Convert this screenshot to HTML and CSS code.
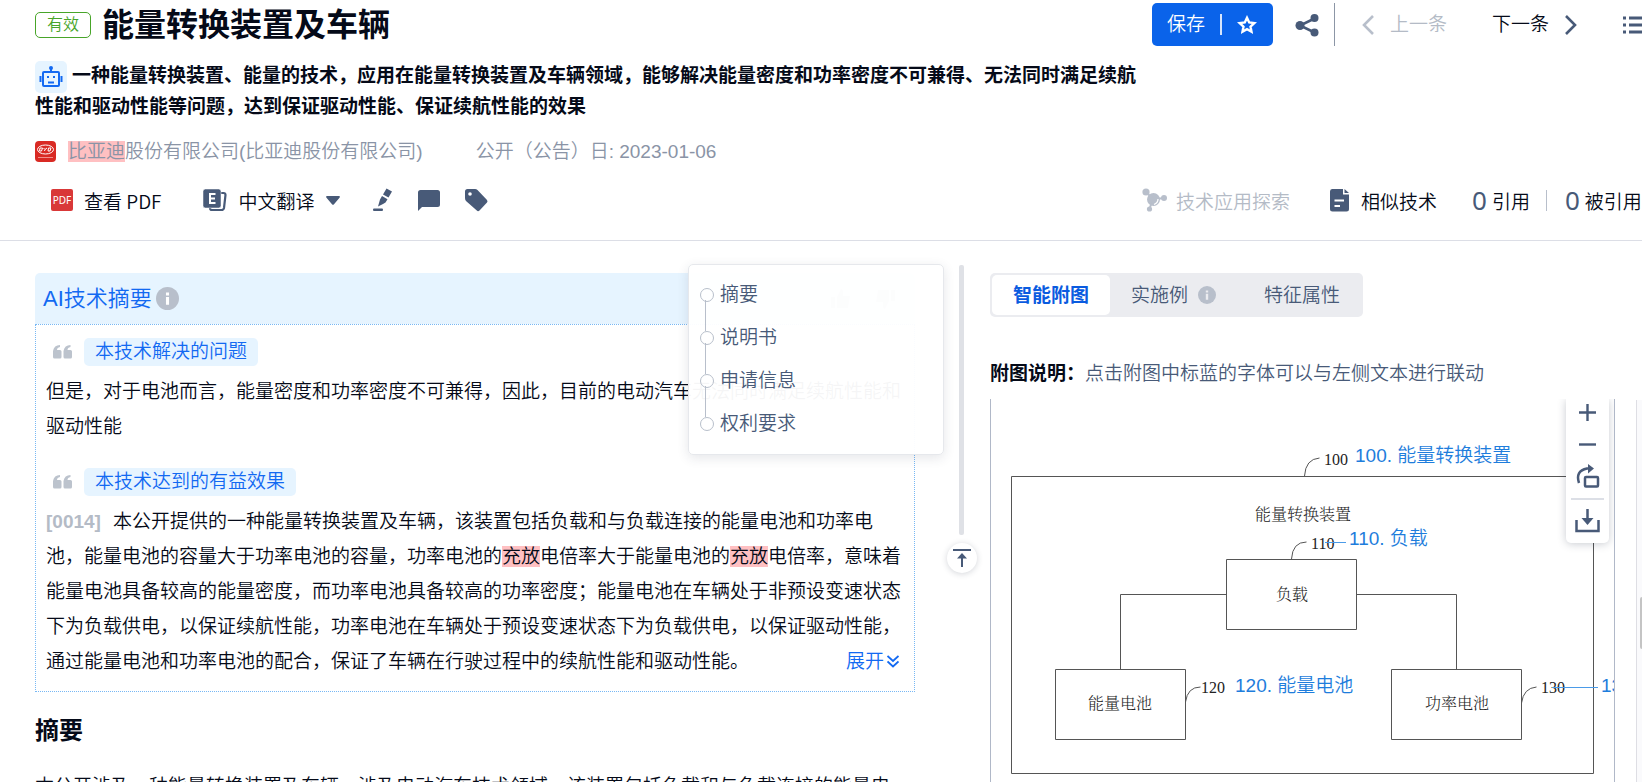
FILE: index.html
```html
<!DOCTYPE html>
<html lang="zh-CN">
<head>
<meta charset="utf-8">
<title>能量转换装置及车辆</title>
<link rel="stylesheet" href="styles.css">
</head>
<body>
<header class="header">
  <div class="header-top">
    <div class="heading">
      <div class="title-row">
        <span class="status">有效</span>
        <h1 class="title">能量转换装置及车辆</h1>
      </div>
      <p class="brief"><span class="robot"><svg width="24" height="26" viewBox="0 0 24 26" fill="none" stroke="#1269f2" stroke-width="2"><rect x="4" y="8" width="16" height="14" rx="1"/><path d="M12 3v5M1.500 12v6M22.500 12v6M9 18.500h6"/><circle cx="12" cy="4" r="1" fill="#1269f2"/><path d="M8 13h2M14 13h2" /></svg></span>一种能量转换装置、能量的技术，应用在能量转换装置及车辆领域，能够解决能量密度和功率密度不可兼得、无法同时满足续航性能和驱动性能等问题，达到保证驱动性能、保证续航性能的效果</p>
    </div>
    <div class="actions">
      <button class="save" type="button"><span>保存</span><i class="save-line"></i><svg width="20" height="20" viewBox="0 0 20 20" fill="none" stroke="#fff" stroke-width="2.400"><path d="M10 2.800l2.200 4.700 5.100.6-3.800 3.500 1 5.100-4.500-2.500-4.500 2.500 1-5.100-3.800-3.500 5.100-.6z"/></svg></button>
      <button class="share" type="button" aria-label="分享"><svg width="24" height="24" viewBox="0 0 24 24" fill="#485a78"><circle cx="5" cy="12.500" r="4.500"/><circle cx="19.500" cy="5" r="4"/><circle cx="19.500" cy="19.500" r="4"/><path d="M19.500 5.500L5 12.500l14.500 7" fill="none" stroke="#485a78" stroke-width="2.500"/></svg></button>
      <i class="actions-line"></i>
      <button class="step prev" type="button" disabled><svg width="12" height="20" viewBox="0 0 12 20" fill="none" stroke="#b8bfcb" stroke-width="2.600"><path d="M11 1L2 10l9 9"/></svg><span>上一条</span></button>
      <button class="step next" type="button"><span>下一条</span><svg width="12" height="20" viewBox="0 0 12 20" fill="none" stroke="#485a78" stroke-width="2.600"><path d="M1 1l9 9-9 9"/></svg></button>
      <button class="list" type="button" aria-label="列表"><svg width="28" height="20" viewBox="0 0 28 20" stroke="#485a78" stroke-width="3"><path d="M1 3h3M7 3h20M1 10h3M7 10h20M1 17h3M7 17h20"/></svg></button>
    </div>
  </div>
  <div class="meta">
    <svg class="logo" width="21" height="21" viewBox="0 0 21 21"><rect width="21" height="21" rx="4" fill="#d92a24"/><ellipse cx="10.500" cy="8.500" rx="8" ry="4.500" fill="none" stroke="#fff" stroke-width="1"/><path d="M5 7h2.500L6.500 10H4.500zM8.500 7l1.500 1.500L9.500 10M12 7l-2 1.500M13.500 7h2.500L15 10h-2z" fill="none" stroke="#fff"/><path d="M3 16.500h15" stroke="#f0908c"/></svg>
    <span class="company"><mark>比亚迪</mark>股份有限公司(比亚迪股份有限公司)</span>
    <span>公开（公告）日: 2023-01-06</span>
  </div>
  <div class="toolbar">
    <div class="tools">
      <button class="tool pdf" type="button"><span class="pdf-icon">PDF</span>查看 PDF</button>
      <button class="tool translate" type="button"><svg width="24" height="24" viewBox="0 0 24 24"><path d="M9 5h11.500q2 0 2 2l-1.500 13q-.5 2-2.500 2H9q-2 0-2-2z" fill="none" stroke="#485a78" stroke-width="2.200"/><rect x="0" y="1" width="18" height="19" rx="2.500" fill="#485a78" stroke="#fff" stroke-width=".5"/><path d="M12.500 6H7v9h5.500M7 10.500h5" fill="none" stroke="#fff" stroke-width="2"/></svg><span>中文翻译</span><svg class="caret" width="14" height="9" viewBox="0 0 14 9" fill="#485a78"><path d="M1 0h12q1.500.5.5 1.700L8 8.300q-1 1-2 0L.5 1.700Q-.5.500 1 0z"/></svg></button>
      <button class="tool" type="button" aria-label="高亮"><svg width="20" height="24" viewBox="0 0 20 24" fill="#485a78"><path d="M13.500 0.500l5.500 3-3.500 6-5.500-3zM9 8l5.500 3.200-2 3.300-2.500 1.500-5 2.500 2-7zM1 20.500h8q1 0 1 1.200T9 23H1q-1 0-1-1.200t1-1.300z"/></svg></button>
      <button class="tool" type="button" aria-label="评论"><svg width="22" height="22" viewBox="0 0 22 22" fill="#485a78"><path d="M2.500 1h17Q22 1 22 3.500v12q0 2.500-2.500 2.500H4L0 22V3.500Q0 1 2.500 1z"/></svg></button>
      <button class="tool" type="button" aria-label="标签"><svg width="23" height="24" viewBox="0 0 23 24"><path d="M2.500 1H10q1.500 0 2.500 1l9.500 10q1 1.500 0 2.500l-7.500 8q-1.500 1.300-2.700 0L1 13Q0 12 0 10V3.500Q0 1 2.500 1z" fill="#485a78"/><circle cx="5" cy="6" r="1.800" fill="#fff"/></svg></button>
    </div>
    <div class="related">
      <button class="tool explore" type="button" disabled><svg width="25" height="24" viewBox="0 0 25 24" fill="#b8bfcb"><circle cx="4" cy="4" r="3.600"/><circle cx="22" cy="10" r="3"/><circle cx="7.500" cy="21" r="2.600"/><circle cx="11.500" cy="11.500" r="6.500"/><path d="M4 4l6 6M7.500 21l2-6M14 11l8-1" stroke="#b8bfcb" stroke-width="2"/><path d="M16 11q0 4-4 5.500" fill="none" stroke="#fff" stroke-width="1.300"/></svg>技术应用探索</button>
      <button class="tool similar" type="button"><svg width="19" height="23" viewBox="0 0 19 23"><path d="M2 0h11v5.500h6V20q0 2.500-2.500 2.500h-14Q0 22.500 0 20V2.500Q0 0 2 0zM14.500 0L19 4h-4.500z" fill="#485a78"/><path d="M4.500 11.500h9.500M4.500 17h5.500" stroke="#fff" stroke-width="2"/></svg>相似技术</button>
      <a class="cite" href="#"><b>0</b>引用</a>
      <i class="cite-line"></i>
      <a class="cite" href="#"><b>0</b>被引用</a>
    </div>
  </div>
</header>

<main class="main">
  <article class="article">
    <section class="summary">
      <div class="summary-head">
        <h2>AI技术摘要</h2>
        <svg width="23" height="23" viewBox="0 0 18 18"><circle cx="9" cy="9" r="9" fill="#b8bfcb"/><path d="M9 7.800v6M9 4.400v2.200" stroke="#fff" stroke-width="2.400"/></svg>
        <span class="votes"><svg width="20" height="20" viewBox="0 0 20 20" fill="#b8bfcb"><path d="M0 8h4v11H0zM6 8l4-8q3 0 2 7h7l-2 12H6z"/></svg><svg width="20" height="20" viewBox="0 0 20 20" fill="#b8bfcb"><path d="M20 1h-4v11h4zM14 12l-4 8q-3 0-2-7H1L3 1h11z"/></svg></span>
      </div>
      <div class="summary-body">
        <h3 class="point"><svg width="19" height="14" viewBox="0 0 19 14" fill="#bcc3cd"><path d="M7 0v2Q4 2.500 4 5h3q1.500 0 1.500 1.500V12Q8.500 13.500 7 13.500H1.500Q0 13.500 0 12V6Q1 0 7 0z"/><path d="M17.500 0v2q-3 .5-3 3h3Q19 5 19 6.500V12q0 1.500-1.500 1.500H12q-1.500 0-1.500-1.500V6q1-6 7-6z"/></svg><span>本技术解决的问题</span></h3>
        <p class="text">但是，对于电池而言，能量密度和功率密度不可兼得，因此，目前的电动汽车无法同时满足续航性能和驱动性能</p>
        <h3 class="point later"><svg width="19" height="14" viewBox="0 0 19 14" fill="#bcc3cd"><path d="M7 0v2Q4 2.500 4 5h3q1.500 0 1.500 1.500V12Q8.500 13.500 7 13.500H1.500Q0 13.500 0 12V6Q1 0 7 0z"/><path d="M17.500 0v2q-3 .5-3 3h3Q19 5 19 6.500V12q0 1.500-1.500 1.500H12q-1.500 0-1.500-1.500V6q1-6 7-6z"/></svg><span>本技术达到的有益效果</span></h3>
        <p class="text"><b class="para">[0014]</b>本公开提供的一种能量转换装置及车辆，该装置包括负载和与负载连接的能量电池和功率电池，能量电池的容量大于功率电池的容量，功率电池的<mark>充放</mark>电倍率大于能量电池的<mark>充放</mark>电倍率，意味着能量电池具备较高的能量密度，而功率电池具备较高的功率密度；能量电池在车辆处于非预设变速状态下为负载供电，以保证续航性能，功率电池在车辆处于预设变速状态下为负载供电，以保证驱动性能，通过能量电池和功率电池的配合，保证了车辆在行驶过程中的续航性能和驱动性能。<a class="expand" href="#">展开<svg width="12" height="13" viewBox="0 0 12 13" fill="none" stroke="#1269f2" stroke-width="1.800"><path d="M.5 1L6 6l5.500-5M.5 6.500l5.500 5 5.500-5"/></svg></a></p>
      </div>
    </section>
    <h2 class="section-title">摘要</h2>
    <p class="abstract">本公开涉及一种能量转换装置及车辆，涉及电动汽车技术领域，该装置包括负载和与负载连接的能量电</p>
    <nav class="outline">
      <a href="#">摘要</a>
      <a href="#">说明书</a>
      <a href="#">申请信息</a>
      <a href="#">权利要求</a>
    </nav>
  </article>

  <div class="gutter">
    <i class="gutter-bar"></i>
    <button class="to-top" type="button" aria-label="回到顶部"><svg width="18" height="20" viewBox="0 0 18 20" fill="#485a78"><path d="M0 1h18v2H0zM9 5l5 5.500h-4V19H8v-8.500H4z"/></svg></button>
  </div>

  <section class="figures">
    <div class="tabs">
      <button class="tab active" type="button">智能附图</button>
      <button class="tab" type="button">实施例<svg width="18" height="18" viewBox="0 0 18 18"><circle cx="9" cy="9" r="9" fill="#b8bfcb"/><path d="M9 7.800v6M9 4.400v2.200" stroke="#ebecf0" stroke-width="2.400"/></svg></button>
      <button class="tab" type="button">特征属性</button>
    </div>
    <p class="hint"><b>附图说明：</b>点击附图中标蓝的字体可以与左侧文本进行联动</p>
    <div class="viewer">
      <svg class="diagram" width="660" height="382" viewBox="991 400 660 382">
        <g fill="none" stroke="#555" stroke-width="1">
          <path d="M1011.500 477.500h582v297h-582z"/>
          <path d="M1226.500 560.500h130v70h-130zM1055.500 670.500h130v70h-130zM1391.500 670.500h130v70h-130z"/>
          <path d="M1226.500 595.500h-106v75M1356.500 595.500h100v75"/>
          <path d="M1304.500 477q1-17 15-18M1291.500 560q1-17 15-17M1185.500 703q2-15 15-15M1521.500 704q2-15 15-16"/>
        </g>
        <g class="mark-no">
          <text x="1324" y="466">100</text><text x="1311" y="550">110</text><text x="1201" y="694">120</text><text x="1541" y="694">130</text>
          <text x="1255" y="521">能量转换装置</text><text x="1276" y="601">负载</text><text x="1088" y="710">能量电池</text><text x="1425" y="710">功率电池</text>
        </g>
        <path d="M1325 543.500h21M1552 688.500h46" stroke="#4b9be8" stroke-width="1"/>
        <g class="mark-name">
          <text x="1355" y="463">100. 能量转换装置</text><text x="1349" y="546">110. 负载</text><text x="1235" y="693">120. 能量电池</text><text x="1601" y="693">130. 功率电池</text>
        </g>
      </svg>
      <div class="zoom">
        <button type="button" aria-label="放大"><svg width="17" height="17" viewBox="0 0 17 17" stroke="#485a78" stroke-width="2.400"><path d="M8.500 0v17M0 8.500h17"/></svg></button>
        <button type="button" aria-label="缩小"><svg width="17" height="17" viewBox="0 0 17 17" stroke="#485a78" stroke-width="2.400"><path d="M0 8.500h17"/></svg></button>
        <button type="button" aria-label="旋转"><svg width="24" height="24" viewBox="0 0 24 24" fill="none" stroke="#485a78" stroke-width="2.500"><rect x="9" y="13" width="13" height="9.500" rx="1"/><path d="M3 19Q-1 7 11 4.500h2"/><path d="M12 0l6 4.500-6 5z" fill="#485a78" stroke="none"/></svg></button>
        <i></i>
        <button type="button" aria-label="下载"><svg width="25" height="24" viewBox="0 0 25 24" fill="none" stroke="#485a78" stroke-width="2.500"><path d="M1.500 11v11h22V11M12.500 0v10"/><path d="M6.500 9h12l-6 7z" fill="#485a78" stroke="none"/></svg></button>
      </div>
    </div>
  </section>
  <div class="rail"><i></i></div>
</main>
</body>
</html>
```
FILE: styles.css
```css
* { box-sizing: border-box; margin: 0; padding: 0; }

body {
  display: flex;
  flex-direction: column;
  height: 100vh;
  overflow: hidden;
  background: #fff;
  color: #050a18;
  font: 350 19px/35px "Liberation Sans", "Noto Sans CJK SC", sans-serif;
}

button {
  display: flex;
  align-items: center;
  flex: none;
  border: 0;
  background: none;
  color: inherit;
  font: inherit;
  white-space: nowrap;
}

a { color: inherit; text-decoration: none; }
svg { flex: none; display: block; }
mark { background: #ffc0c2; color: inherit; line-height: 21px; }

/* Header */
.header { flex: none; border-bottom: 1px solid #dcdee6; }
.header-top { display: flex; justify-content: space-between; }
.heading { flex: 1; max-width: 1140px; padding-left: 35px; }
.title-row { display: flex; align-items: center; gap: 11px; height: 50px; }
.status {
  border: 1px solid #48a529;
  border-radius: 5px;
  padding: 0 11px;
  color: #48a529;
  font-size: 16px;
  line-height: 24px;
}
.title { font-size: 32px; line-height: 48px; font-weight: 700; }
.brief { margin-top: 10px; font-weight: 700; line-height: 31px; }
.robot {
  display: inline-flex;
  align-items: center;
  justify-content: center;
  width: 32px;
  height: 32px;
  margin: -3px 5px -3px 0;
  border-radius: 5px;
  background: #e6f4ff;
  vertical-align: middle;
}

.actions { display: flex; align-items: center; flex: 0 0 490px; height: 43px; margin-top: 3px; overflow: hidden; }
.save { height: 43px; padding: 0 16px 0 15px; border-radius: 5px; background: #0a63ea; color: #fff; }
.save-line { width: 2px; height: 21px; margin: 0 15px; background: #d6e5fc; }
.share { margin-left: 22px; }
.actions-line { flex: none; width: 1px; height: 43px; margin: 0 27px 0 15px; background: #8c96a6; }
.step { gap: 16px; }
.prev { color: #b4bbc6; }
.next { margin-left: 45px; }
.list { margin-left: 45px; }

.meta { display: flex; align-items: center; height: 30px; margin-top: 14px; padding-left: 35px; color: #8a94a6; }
.company { margin: 0 53px 0 12px; }

.toolbar { display: flex; justify-content: space-between; align-items: center; height: 40px; margin: 14px 0 20px; }
.tools, .related, .tool { display: flex; align-items: center; }
.tools { gap: 25px; padding-left: 51px; }
.tool, .cite { font-family: "Noto Sans CJK SC", sans-serif; }
.pdf { gap: 11px; margin-right: 17px; }
.pdf-icon {
  width: 22px;
  border-radius: 2px;
  background: #d93838;
  color: #fff;
  font: 10px/22px "Noto Sans", sans-serif;
  text-align: center;
}
.translate { gap: 11px; margin-right: 8px; }
.related { flex: 0 0 500px; overflow: hidden; white-space: nowrap; }
.explore { gap: 9px; color: #b4bbc6; }
.similar { gap: 12px; margin: 0 35px 0 40px; }
.cite { display: flex; align-items: center; gap: 5px; flex: none; }
.cite b { color: #485a78; font: 26px/35px "Noto Sans", sans-serif; }
.cite-line { flex: none; width: 1px; height: 21px; margin: 0 18px 0 16px; background: #b8bfcb; }

/* Page body */
.main {
  flex: 1;
  display: grid;
  grid-template-columns: minmax(0, 880fr) 75px minmax(0, 625fr) 27px;
  min-height: 0;
  padding: 24px 0 0 35px;
}
.article { position: relative; margin-top: 8px; }
.summary-head {
  display: flex;
  align-items: center;
  gap: 4px;
  height: 51px;
  padding: 0 20px 0 8px;
  border-radius: 5px 5px 0 0;
  background: #e6f4ff;
}
.summary-head h2 { color: #1269f2; font-size: 22px; font-weight: 350; }
.votes { display: flex; gap: 24px; margin-left: auto; }
.summary-body { padding: 13px 10px 12px; border: 1px dotted #78b8f4; }
.point { display: flex; align-items: center; gap: 12px; padding-left: 7px; font-size: 19px; font-weight: 350; }
.point span { padding: 0 11px; border-radius: 5px; background: #e6f4ff; color: #1269f2; line-height: 28px; }
.point.later { margin-top: 24px; }
.text { margin-top: 8px; }
.para { margin-right: 12px; color: #b4bbc6; font-weight: 700; }
.expand { display: flex; align-items: center; gap: 3px; float: right; margin-right: 5px; color: #1269f2; }
.section-title { margin-top: 21px; font-size: 24px; font-weight: 700; }
.abstract { margin-top: 21px; white-space: nowrap; }

.outline {
  position: absolute;
  top: -9px;
  right: -29px;
  width: 256px;
  height: 191px;
  padding: 8px 11px;
  border: 1px solid #e6e8ec;
  border-radius: 5px;
  background: rgba(255, 255, 255, 0.96);
  box-shadow: 0 3px 12px rgba(40, 50, 70, 0.12);
  color: #485a78;
}
.outline a { position: relative; display: flex; align-items: center; gap: 6px; height: 43px; }
.outline a::before { content: ""; width: 12px; height: 12px; border: 1px solid #b8bfcb; border-radius: 50%; }
.outline a + a::after { content: ""; position: absolute; left: 5px; bottom: 28px; width: 1px; height: 31px; background: #b8bfcb; }

.gutter { display: flex; flex-direction: column; align-items: center; gap: 8px; padding-left: 18px; }
.gutter-bar { width: 5px; height: 270px; border-radius: 2px; background: #dfe1e6; }
.to-top { justify-content: center; width: 30px; height: 30px; border-radius: 50%; background: #fff; box-shadow: 0 1px 6px rgba(40, 50, 70, 0.2); }

.figures { display: flex; flex-direction: column; min-height: 0; padding-top: 8px; }
.tabs { display: flex; align-self: flex-start; padding: 2px; border-radius: 5px; background: #ebecf0; color: #485a78; }
.tab { gap: 10px; height: 40px; padding: 0 21px; border-radius: 5px; }
.tab:last-child { padding-left: 27px; }
.active { background: #fff; color: #0a5be0; font-weight: 700; }
.hint { margin-top: 39px; color: #485a78; }
.hint b { color: #050a18; font-weight: 700; }
.viewer { position: relative; flex: 1; min-height: 0; margin-top: 8px; overflow: hidden; border: solid #b0b8c8; border-width: 0 1px; }
.mark-no { fill: #222; font: 350 16px "Liberation Serif", "Noto Serif CJK SC", "Noto Sans CJK SC", serif; }
.mark-name { fill: #1e7ddc; }
.zoom {
  position: absolute;
  top: 0;
  right: 5px;
  display: flex;
  flex-direction: column;
  align-items: center;
  width: 43px;
  height: 144px;
  padding-top: 5px;
  border-radius: 0 0 5px 5px;
  background: #fff;
  box-shadow: 0 1px 8px rgba(40, 50, 70, 0.25);
}
.zoom button { height: 17px; margin-bottom: 15px; }
.zoom button:nth-child(2) { margin-bottom: 11px; }
.zoom button:nth-child(3) { height: 24px; margin-bottom: 10px; }
.zoom button:last-child { height: 24px; margin: 9px 0 0; }
.zoom i { width: 33px; height: 2px; background: #dcdfe6; }

.rail { width: 6px; margin: 135px 0 0 21px; padding: 197px 0 0 3px; border-left: 1px solid #dedee4; background: #fafafc; }
.rail i { display: block; height: 52px; border-radius: 2px 0 0 2px; background: #c4c4c4; }
```
